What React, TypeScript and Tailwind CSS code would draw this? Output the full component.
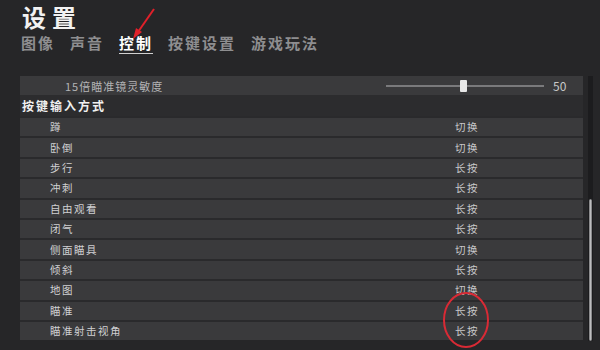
import React from "react";

const rows: [string, string][] = [
  ["蹲", "切换"],
  ["卧倒", "切换"],
  ["步行", "长按"],
  ["冲刺", "长按"],
  ["自由观看", "长按"],
  ["闭气", "长按"],
  ["侧面瞄具", "切换"],
  ["倾斜", "长按"],
  ["地图", "切换"],
  ["瞄准", "长按"],
  ["瞄准射击视角", "长按"],
];

const tabs = ["图像", "声音", "控制", "按键设置", "游戏玩法"];

export default function App() {
  return (
    <div
      className="relative w-[600px] h-[350px] overflow-hidden bg-[#262628] text-white"
      style={{ fontFamily: '"Noto Sans CJK SC", "Noto Sans", sans-serif' }}
    >
      <div className="pl-[22px] pt-[4px] text-[24px] leading-[26px] font-bold tracking-[6px] text-[#f2f2f2]">
        设置
      </div>
      <div className="flex pl-[21px] mt-[4px] gap-[15px] text-[15px] leading-[18px] tracking-[2px] font-bold">
        {tabs.map((t) => (
          <div
            key={t}
            className={
              t === "控制"
                ? "text-white border-b border-[#d0d0d0] pb-[1px]"
                : "text-[#8e8e90] pb-[1px]"
            }
          >
            {t}
          </div>
        ))}
      </div>
      <div className="flex mt-[22px] h-[266px]">
        <div className="ml-[20px] w-[563px] flex flex-col border-t border-[#3a3a3c]">
          <div className="h-[18px] bg-[#3a3a3c] flex items-center text-[11px] text-[#b4b4b6] tracking-[1px]">
            <div className="ml-[45px] flex-1">15倍瞄准镜灵敏度</div>
            <div className="relative w-[158px] h-[12px] flex items-center mr-[9px]">
              <div className="w-full h-[2px] bg-[#7a7a7c]"></div>
              <div className="absolute left-[74px] top-0 w-[7px] h-[12px] bg-[#e8e8e8] rounded-[1px]"></div>
            </div>
            <div className="w-[30px] text-[12px] text-[#c8c8c8] tracking-normal">50</div>
          </div>
          <div className="h-[21px] bg-[#2c2c2e] flex items-center pl-[2px] text-[12px] font-bold tracking-[2px] text-[#f0f0f0]">
            按键输入方式
          </div>
          {rows.map(([label, value]) => (
            <div
              key={label}
              className="h-[20.4px] bg-[#3a3a3c] border-t-2 border-[#2a2a2c] flex items-center text-[10.5px] text-[#d0d0d2] tracking-[1.5px]"
            >
              <div className="pl-[30px] w-[435px]">{label}</div>
              <div className="text-[#c8c8ca]">{value}</div>
            </div>
          ))}
        </div>
        <div className="ml-[5px] w-[5px] h-[265px] bg-[#1c1c1e] flex flex-col justify-end">
          <div className="h-[142px] bg-[#bdbdbf] rounded-[2px] mx-[1px] border border-[#8a8a8c]"></div>
        </div>
      </div>
      <svg className="absolute left-0 top-0" width="600" height="350">
        <line x1="154" y1="9" x2="138" y2="32" stroke="#e0202a" strokeWidth="2" />
        <polygon points="133,39 136,28 142,32" fill="#e0202a" />
        <ellipse cx="466" cy="320" rx="22" ry="27" fill="none" stroke="#d92a35" strokeWidth="2" />
      </svg>
    </div>
  );
}
